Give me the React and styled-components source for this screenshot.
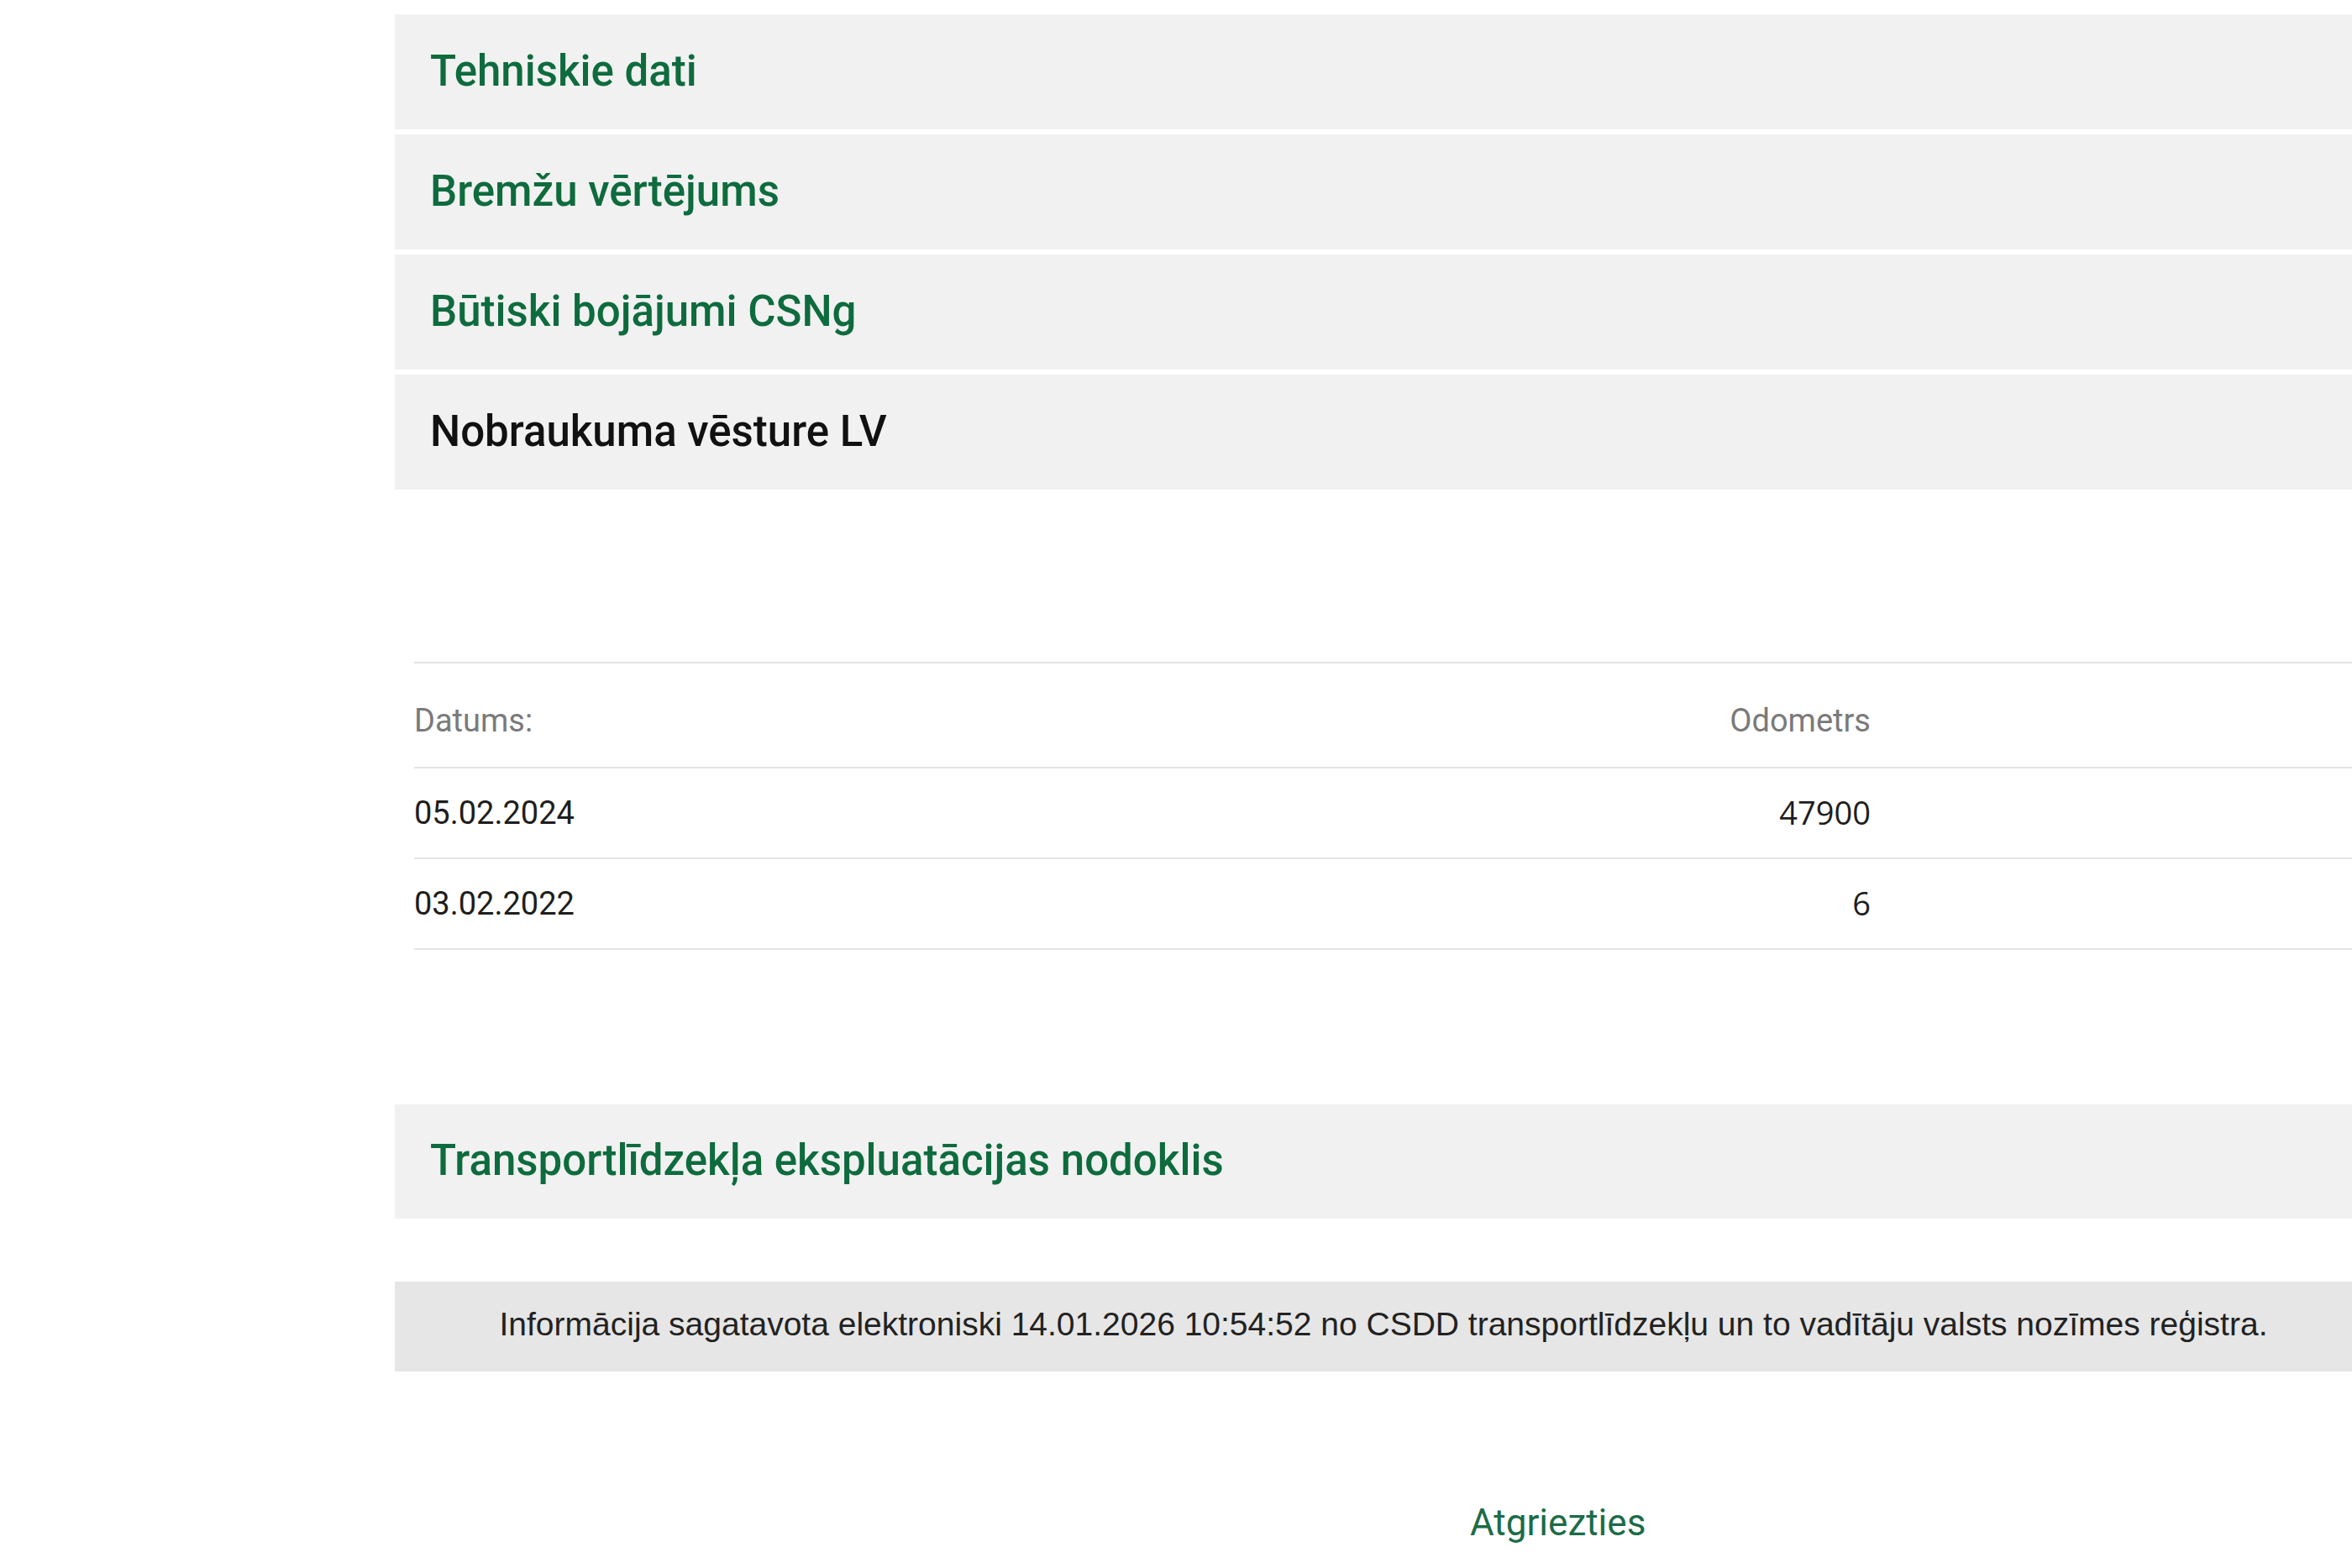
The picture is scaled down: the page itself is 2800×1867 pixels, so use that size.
import React from "react";
import styled, { createGlobalStyle } from "styled-components";

const GlobalStyle = createGlobalStyle`
  html, body { margin: 0; padding: 0; background: #ffffff; }
  body { font-family: Roboto, "Liberation Sans", Arial, sans-serif; overflow: hidden; }
`;

const Page = styled.div`
  width: 2800px;
  min-height: 1867px;
  box-sizing: border-box;
  padding: 17px 0 0 470px;
  display: flex;
  flex-direction: column;
`;

const Accordion = styled.div`
  display: flex;
  flex-direction: column;
  gap: 6px;
`;

const Panel = styled.div`
  height: ${(p) => p.$h || 137}px;
  background: #f1f1f1;
  display: flex;
  align-items: center;
  padding: 0 0 3px 42px;
  box-sizing: border-box;
  margin-top: ${(p) => p.$mt || 0}px;
`;

const PanelTitle = styled.span`
  font-family: Roboto, "Liberation Sans", sans-serif;
  font-weight: 500;
  font-size: 51px;
  color: ${(p) => (p.$active ? "#111111" : "#0e6b3d")};
`;

const Table = styled.div`
  margin: 205px 0 0 23px;
  border-top: 2px solid #e4e4e4;
  display: flex;
  flex-direction: column;
`;

const Row = styled.div`
  display: grid;
  grid-template-columns: 1fr 400px 573px;
  align-items: center;
  height: ${(p) => p.$h}px;
  border-bottom: 2px solid #e4e4e4;
  box-sizing: border-box;
  padding-top: ${(p) => p.$pt || 0}px;
`;

const HeadCell = styled.div`
  font-family: Roboto, sans-serif;
  font-size: 38px;
  color: #7a7a7a;
  text-align: ${(p) => (p.$right ? "right" : "left")};
`;

const DateCell = styled.div`
  font-family: Roboto, sans-serif;
  font-size: 38px;
  color: #1e1e1e;
`;

const NumCell = styled.div`
  font-family: "Open Sans", sans-serif;
  font-size: 38px;
  color: #1e1e1e;
  text-align: right;
  padding-bottom: 3px;
`;

const InfoBar = styled.div`
  margin-top: 75px;
  height: 107px;
  background: #e6e6e6;
  display: flex;
  align-items: center;
  justify-content: center;
  padding: 0 0 6px 24px;
  box-sizing: border-box;
`;

const InfoText = styled.p`
  margin: 0;
  font-family: "Liberation Sans", Arial, sans-serif;
  font-size: 39px;
  color: #222222;
`;

const Footer = styled.div`
  margin-top: 154px;
  padding-left: 1280px;
`;

const BackLink = styled.a`
  font-family: Roboto, sans-serif;
  font-size: 44px;
  color: #1d6b48;
  text-decoration: none;
`;

const panels = [
  "Tehniskie dati",
  "Bremžu vērtējums",
  "Būtiski bojājumi CSNg",
];

const rows = [
  { date: "05.02.2024", odo: "47900" },
  { date: "03.02.2022", odo: "6" },
];

export default function App() {
  return (
    <>
      <GlobalStyle />
      <Page>
        <Accordion>
          {panels.map((t) => (
            <Panel key={t}>
              <PanelTitle>{t}</PanelTitle>
            </Panel>
          ))}
          <Panel>
            <PanelTitle $active>Nobraukuma vēsture LV</PanelTitle>
          </Panel>
        </Accordion>

        <Table>
          <Row $h={125} $pt={12}>
            <HeadCell>Datums:</HeadCell>
            <HeadCell $right>Odometrs</HeadCell>
            <div />
          </Row>
          {rows.map((r) => (
            <Row key={r.date} $h={108}>
              <DateCell>{r.date}</DateCell>
              <NumCell>{r.odo}</NumCell>
              <div />
            </Row>
          ))}
        </Table>

        <Panel $mt={184} $h={136}>
          <PanelTitle>Transportlīdzekļa ekspluatācijas nodoklis</PanelTitle>
        </Panel>

        <InfoBar>
          <InfoText>
            Informācija sagatavota elektroniski 14.01.2026 10:54:52 no CSDD transportlīdzekļu un to vadītāju valsts nozīmes reģistra.
          </InfoText>
        </InfoBar>

        <Footer>
          <BackLink href="#">Atgriezties</BackLink>
        </Footer>
      </Page>
    </>
  );
}
